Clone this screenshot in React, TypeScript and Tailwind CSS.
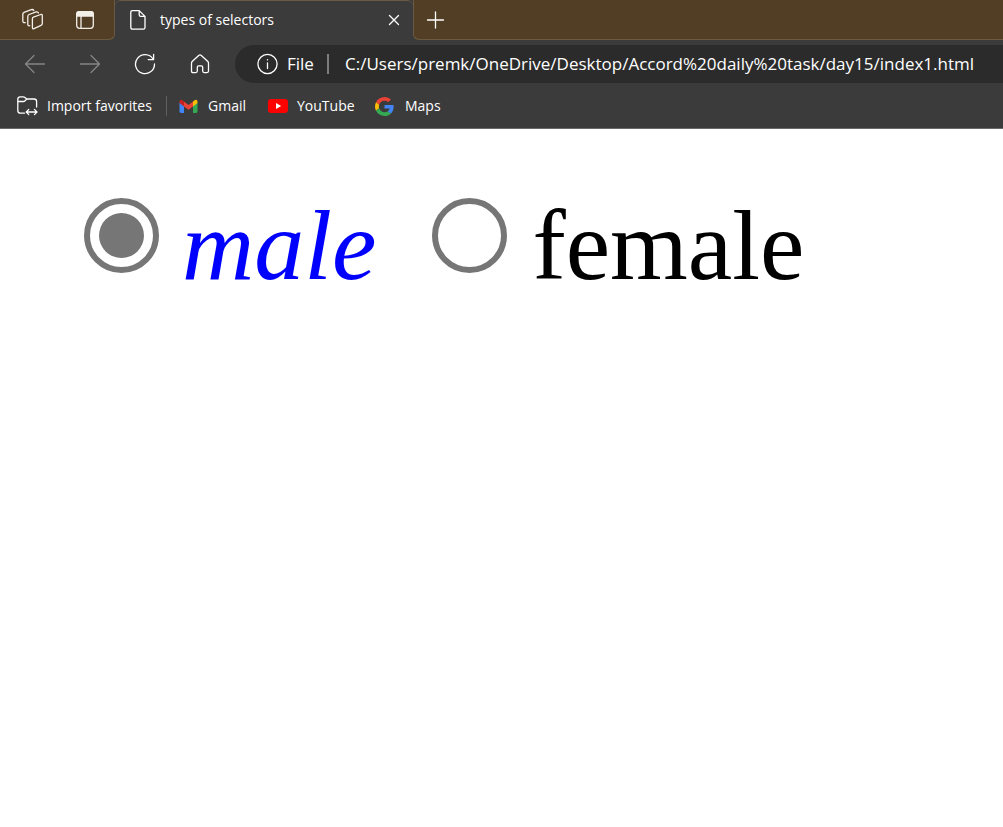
import type { ReactNode } from "react";

type IconProps = { children: ReactNode; className?: string; size?: number };

function Icon({ children, className = "", size = 22 }: IconProps) {
  return (
    <svg
      width={size}
      height={size}
      viewBox={`0 0 ${size} ${size}`}
      fill="none"
      stroke="currentColor"
      strokeWidth="1.3"
      strokeLinecap="round"
      strokeLinejoin="round"
      aria-hidden="true"
      className={`shrink-0 ${className}`}
    >
      {children}
    </svg>
  );
}

function TabStrip() {
  return (
    <div className="flex h-10 bg-[#3b3b3b]">
      <div className="flex w-[115px] shrink-0 items-center gap-[30px] rounded-br-md border-r border-b border-[#6b5a42] bg-[#523e24] pl-[21px] text-[#f3efe9]">
        <button type="button" aria-label="Workspaces">
          <Icon size={23}>
            <path d="M12.4 9.1 19.8 6.5Q21.3 6.1 21.3 7.6V15.4Q21.3 16.8 20 17.4L13 20.6Q11.4 21.3 11.4 19.6V10.6Q11.4 9.5 12.4 9.1Z" />
            <path d="M8.7 17.7Q6.8 18.2 6.8 16.3V8.4Q6.8 7 8.1 6.5L15.2 3.9Q17 3.5 17.4 5" />
            <path d="M4.3 14.6Q1.8 15.2 1.8 12.8V6.3Q1.8 4.9 3.1 4.3L10.2 1.7Q12.2 1.1 12.8 2.6" />
          </Icon>
        </button>
        <button type="button" aria-label="Tab actions menu">
          <Icon size={22}>
            <rect x="2.7" y="2.7" width="16.6" height="16.6" rx="3" />
            <path d="M2.7 7V5Q2.7 2.7 5 2.7H17Q19.3 2.7 19.3 5V7Z" fill="currentColor" />
            <path d="M7 7V19" />
          </Icon>
        </button>
      </div>
      <div className="flex w-[298px] shrink-0 items-center rounded-t-md border-t border-[#6b5a42] pr-2 pb-px pl-3 text-white">
        <Icon className="mr-[11px]">
          <path d="M5.4 1.6H12.2L18 7.4V18.4Q18 20.2 16.2 20.2H5.6Q3.8 20.2 3.8 18.4V3.2Q3.8 1.6 5.4 1.6ZM12.2 1.6V5.8Q12.2 7.4 13.8 7.4H18" />
        </Icon>
        <span className="grow text-sm whitespace-nowrap">types of selectors</span>
        <button type="button" aria-label="Close tab">
          <Icon>
            <path d="m6.5 6.5 9 9m0-9-9 9" />
          </Icon>
        </button>
      </div>
      <div className="flex grow items-center rounded-bl-md border-b border-l border-[#6b5a42] bg-[#523e24] pl-[10px] text-white">
        <button type="button" aria-label="New tab">
          <Icon>
            <path d="M11.5 3V19M3.5 11H19.5" />
          </Icon>
        </button>
      </div>
    </div>
  );
}

function Toolbar() {
  return (
    <div className="flex h-12 items-center pl-6 text-white">
      <div className="flex shrink-0 items-center gap-[33px]">
        <button type="button" aria-label="Back" className="text-[#858585]">
          <Icon><path d="M20.5 11H1.5M10 2.5 1.5 11 10 19.5" /></Icon>
        </button>
        <button type="button" aria-label="Forward" className="text-[#858585]">
          <Icon><path d="M1.5 11H20.5M12 2.5 20.5 11 12 19.5" /></Icon>
        </button>
        <button type="button" aria-label="Refresh">
          <Icon>
            <path d="M19 6A9.5 9.5 0 1 0 20.5 11M19.6 1.5V6.6H14.2" />
          </Icon>
        </button>
        <button type="button" aria-label="Home">
          <Icon>
            <path d="M2.5 10.2Q2.5 9 3.4 8.2L9.7 2.4Q11 1.3 12.3 2.4L18.6 8.2Q19.5 9 19.5 10.2V18.1Q19.5 19.6 18 19.6H15.2Q13.7 19.6 13.7 18.1V14.2Q13.7 12.8 12.3 12.8H9.7Q8.3 12.8 8.3 14.2V18.1Q8.3 19.6 6.8 19.6H4Q2.5 19.6 2.5 18.1Z" />
          </Icon>
        </button>
      </div>
      <div className="ml-6 flex h-[38px] min-w-0 grow items-center rounded-l-full bg-[#2b2b2b] pl-[21px] text-[17px]">
        <Icon>
          <circle cx="11.5" cy="11" r="9.6" />
          <path d="M11.5 10V15.6M11.5 6.6V6.9" />
        </Icon>
        <label htmlFor="address" className="ml-[9px] w-10 shrink-0">File</label>
        <span className="h-5 w-[2px] shrink-0 bg-[#7d7d7d]" />
        <input
          id="address"
          type="text"
          defaultValue="C:/Users/premk/OneDrive/Desktop/Accord%20daily%20task/day15/index1.html"
          className="ml-4 min-w-0 grow bg-transparent outline-none"
        />
      </div>
    </div>
  );
}

function GmailLogo() {
  return (
    <svg width="20" height="16" viewBox="0 0 20 16" aria-hidden="true">
      <path d="M0.5 4 5 7V15H2Q0.5 15 0.5 13.6Z" fill="#4285f4" />
      <path d="M14 7 18.5 4V13.6Q18.5 15 17 15H14Z" fill="#34a853" />
      <path d="M14 3.6 15.5 2.3Q16.8 1.3 17.8 2 18.5 2.6 18.5 4V5L14 8.4Z" fill="#fbbc04" />
      <path d="M5 8.4V3.6L9.5 7 14 3.6V8.4L9.5 11.8Z" fill="#ea4335" />
      <path d="M0.5 5V4Q0.5 2.6 1.2 2 2.2 1.3 3.5 2.3L5 3.6V8.4Z" fill="#c5221f" />
    </svg>
  );
}

function YouTubeLogo() {
  return (
    <svg width="20" height="16" viewBox="0 0 20 16" aria-hidden="true">
      <rect y="1" width="20" height="14" rx="3.2" fill="#ff0000" />
      <path d="M8 5V11L13.2 8Z" fill="#ffffff" />
    </svg>
  );
}

function GoogleLogo() {
  return (
    <svg width="19" height="19" viewBox="0 0 48 48" aria-hidden="true">
      <path fill="#ea4335" d="M24 9.5c3.54 0 6.71 1.22 9.21 3.6l6.85-6.85C35.9 2.38 30.47 0 24 0 14.62 0 6.51 5.38 2.56 13.22l7.98 6.19C12.43 13.72 17.74 9.5 24 9.5z" />
      <path fill="#4285f4" d="M46.98 24.55c0-1.57-.15-3.09-.38-4.55H24v9.02h12.94c-.58 2.96-2.26 5.48-4.78 7.18l7.73 6c4.51-4.18 7.09-10.36 7.09-17.65z" />
      <path fill="#fbbc05" d="M10.53 28.59A14.5 14.5 0 0 1 9.77 24c0-1.6.27-3.14.76-4.59l-7.98-6.19A24 24 0 0 0 0 24c0 3.88.92 7.54 2.56 10.78z" />
      <path fill="#34a853" d="M24 48c6.48 0 11.93-2.13 15.89-5.81l-7.73-6c-2.15 1.45-4.92 2.3-8.16 2.3-6.26 0-11.57-4.22-13.47-9.91l-7.98 6.19C6.51 42.62 14.62 48 24 48z" />
    </svg>
  );
}

function FavoritesBar() {
  return (
    <nav className="flex h-10 items-center pb-1 pl-4 text-sm whitespace-nowrap text-white">
      <button type="button" className="flex w-[150px] shrink-0 items-center gap-[9px]">
        <Icon>
          <path d="M8.5 18.2H4.4Q1.8 18.2 1.8 15.6V4.2Q1.8 1.8 4.2 1.8H7.3Q8.2 1.8 8.9 2.4L10.8 4H18Q20.6 4 20.6 6.6V12M1.8 6.5H7.4Q8.3 6.5 9 5.8L10.8 4" />
          <path d="M10.4 17H20.8M12.8 14.4 10.2 17 12.8 19.6M18.4 14.4 21 17 18.4 19.6" />
        </Icon>
        Import favorites
      </button>
      <span className="h-5 w-px bg-[#606060]" />
      <a href="#gmail" className="ml-3 flex w-[89px] shrink-0 items-center gap-[9px]">
        <GmailLogo />
        Gmail
      </a>
      <a href="#youtube" className="flex w-[107px] shrink-0 items-center gap-[9px]">
        <YouTubeLogo />
        YouTube
      </a>
      <a href="#maps" className="flex items-center gap-[11px]">
        <GoogleLogo />
        Maps
      </a>
    </nav>
  );
}

const radioClass =
  "size-[75px] shrink-0 appearance-none rounded-full border-6 border-[#767676] p-[9px] before:block before:size-full before:rounded-full checked:before:bg-[#767676]";

export default function App() {
  return (
    <div className="min-h-screen bg-white">
      <header className="border-b border-[#6a6a6a] bg-[#3b3b3b] font-['Open_Sans',sans-serif]">
        <TabStrip />
        <Toolbar />
        <FavoritesBar />
      </header>
      <main className="flex flex-wrap items-start gap-x-[56px] pt-[69px] pl-[84px] font-['Liberation_Serif',serif] text-[100px] leading-[96px]">
        <div className="flex gap-[23px]">
          <input id="male" type="radio" name="gender" defaultChecked className={radioClass} />
          <label htmlFor="male" className="text-[#0000ff] italic">male</label>
        </div>
        <div className="flex gap-[25px]">
          <input id="female" type="radio" name="gender" className={radioClass} />
          <label htmlFor="female" className="text-black">female</label>
        </div>
      </main>
    </div>
  );
}
